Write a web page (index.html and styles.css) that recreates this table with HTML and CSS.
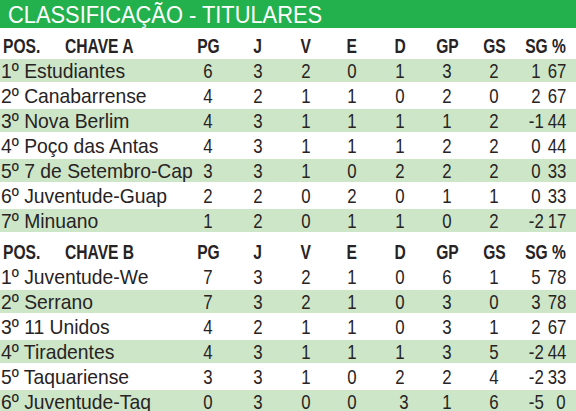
FILE: index.html
```html
<!DOCTYPE html>
<html lang="pt">
<head>
<meta charset="utf-8">
<title>Classificação - Titulares</title>
<link rel="stylesheet" href="styles.css">
</head>
<body>
<div class="board">
  <div class="title"><span>CLASSIFICAÇÃO - TITULARES</span></div>

  <div class="group group-a">
    <div class="row head">
      <div class="name"><span class="pos">POS.</span><span class="key">CHAVE A</span></div>
      <div class="n"><span>PG</span></div><div class="n"><span>J</span></div><div class="n"><span>V</span></div><div class="n"><span>E</span></div><div class="n"><span>D</span></div><div class="n"><span>GP</span></div><div class="n gs"><span>GS</span></div><div class="n"><span>SG</span></div><div class="p"><span>%</span></div>
    </div>
    <div class="row alt"><div class="name"><span>1º Estudiantes</span></div><div class="n"><span>6</span></div><div class="n"><span>3</span></div><div class="n"><span>2</span></div><div class="n"><span>0</span></div><div class="n"><span>1</span></div><div class="n"><span>3</span></div><div class="n gs"><span>2</span></div><div class="n"><span>1</span></div><div class="p"><span>67</span></div></div>
    <div class="row"><div class="name"><span>2º Canabarrense</span></div><div class="n"><span>4</span></div><div class="n"><span>2</span></div><div class="n"><span>1</span></div><div class="n"><span>1</span></div><div class="n"><span>0</span></div><div class="n"><span>2</span></div><div class="n gs"><span>0</span></div><div class="n"><span>2</span></div><div class="p"><span>67</span></div></div>
    <div class="row alt"><div class="name"><span>3º Nova Berlim</span></div><div class="n"><span>4</span></div><div class="n"><span>3</span></div><div class="n"><span>1</span></div><div class="n"><span>1</span></div><div class="n"><span>1</span></div><div class="n"><span>1</span></div><div class="n gs"><span>2</span></div><div class="n"><span>-1</span></div><div class="p"><span>44</span></div></div>
    <div class="row"><div class="name"><span>4º Poço das Antas</span></div><div class="n"><span>4</span></div><div class="n"><span>3</span></div><div class="n"><span>1</span></div><div class="n"><span>1</span></div><div class="n"><span>1</span></div><div class="n"><span>2</span></div><div class="n gs"><span>2</span></div><div class="n"><span>0</span></div><div class="p"><span>44</span></div></div>
    <div class="row alt"><div class="name"><span>5º 7 de Setembro-Cap</span></div><div class="n"><span>3</span></div><div class="n"><span>3</span></div><div class="n"><span>1</span></div><div class="n"><span>0</span></div><div class="n"><span>2</span></div><div class="n"><span>2</span></div><div class="n gs"><span>2</span></div><div class="n"><span>0</span></div><div class="p"><span>33</span></div></div>
    <div class="row"><div class="name"><span>6º Juventude-Guap</span></div><div class="n"><span>2</span></div><div class="n"><span>2</span></div><div class="n"><span>0</span></div><div class="n"><span>2</span></div><div class="n"><span>0</span></div><div class="n"><span>1</span></div><div class="n gs"><span>1</span></div><div class="n"><span>0</span></div><div class="p"><span>33</span></div></div>
    <div class="row alt"><div class="name"><span>7º Minuano</span></div><div class="n"><span>1</span></div><div class="n"><span>2</span></div><div class="n"><span>0</span></div><div class="n"><span>1</span></div><div class="n"><span>1</span></div><div class="n"><span>0</span></div><div class="n gs"><span>2</span></div><div class="n"><span>-2</span></div><div class="p"><span>17</span></div></div>
  </div>

  <div class="group group-b">
    <div class="row head">
      <div class="name"><span class="pos">POS.</span><span class="key">CHAVE B</span></div>
      <div class="n"><span>PG</span></div><div class="n"><span>J</span></div><div class="n"><span>V</span></div><div class="n"><span>E</span></div><div class="n"><span>D</span></div><div class="n"><span>GP</span></div><div class="n gs"><span>GS</span></div><div class="n"><span>SG</span></div><div class="p"><span>%</span></div>
    </div>
    <div class="row"><div class="name"><span>1º Juventude-We</span></div><div class="n"><span>7</span></div><div class="n"><span>3</span></div><div class="n"><span>2</span></div><div class="n"><span>1</span></div><div class="n"><span>0</span></div><div class="n"><span>6</span></div><div class="n gs"><span>1</span></div><div class="n"><span>5</span></div><div class="p"><span>78</span></div></div>
    <div class="row alt"><div class="name"><span>2º Serrano</span></div><div class="n"><span>7</span></div><div class="n"><span>3</span></div><div class="n"><span>2</span></div><div class="n"><span>1</span></div><div class="n"><span>0</span></div><div class="n"><span>3</span></div><div class="n gs"><span>0</span></div><div class="n"><span>3</span></div><div class="p"><span>78</span></div></div>
    <div class="row"><div class="name"><span>3º 11 Unidos</span></div><div class="n"><span>4</span></div><div class="n"><span>2</span></div><div class="n"><span>1</span></div><div class="n"><span>1</span></div><div class="n"><span>0</span></div><div class="n"><span>3</span></div><div class="n gs"><span>1</span></div><div class="n"><span>2</span></div><div class="p"><span>67</span></div></div>
    <div class="row alt"><div class="name"><span>4º Tiradentes</span></div><div class="n"><span>4</span></div><div class="n"><span>3</span></div><div class="n"><span>1</span></div><div class="n"><span>1</span></div><div class="n"><span>1</span></div><div class="n"><span>3</span></div><div class="n gs"><span>5</span></div><div class="n"><span>-2</span></div><div class="p"><span>44</span></div></div>
    <div class="row"><div class="name"><span>5º Taquariense</span></div><div class="n"><span>3</span></div><div class="n"><span>3</span></div><div class="n"><span>1</span></div><div class="n"><span>0</span></div><div class="n"><span>2</span></div><div class="n"><span>2</span></div><div class="n gs"><span>4</span></div><div class="n"><span>-2</span></div><div class="p"><span>33</span></div></div>
    <div class="row alt"><div class="name"><span>6º Juventude-Taq</span></div><div class="n"><span>0</span></div><div class="n"><span>3</span></div><div class="n"><span>0</span></div><div class="n"><span>0</span></div><div class="n shift"><span>3</span></div><div class="n"><span>1</span></div><div class="n gs"><span>6</span></div><div class="n"><span>-5</span></div><div class="p"><span>0</span></div></div>
  </div>
</div>
</body>
</html>
```

FILE: styles.css
```css
html, body {
  margin: 0;
  padding: 0;
  background: #ffffff;
}

body {
  width: 576px;
  height: 411px;
  overflow: hidden;
  font-family: "Liberation Sans", Arial, sans-serif;
  color: #272324;
}

.board {
  display: flex;
  flex-direction: column;
}

.title {
  height: 28px;
  background: #22b14c;
  color: #ffffff;
  display: flex;
  align-items: center;
  padding-left: 8px;
}

.title span {
  display: inline-block;
  font-size: 23.5px;
  line-height: 28px;
  transform: scaleX(0.93);
  transform-origin: left center;
  white-space: nowrap;
  padding-top: 1px;
}

.group-a {
  margin-top: 5px;
}

.group-b {
  margin-top: 5px;
}

.row {
  display: grid;
  grid-template-columns: 184px 48px 52px 44px 48px 48px 46px 51px 30px 25px;
  align-items: center;
  height: 23px;
  margin-bottom: 2px;
}

.row > div {
  min-width: 0;
}

.row.alt {
  background: #cde6c8;
}

.row.head {
  height: 26px;
  margin-bottom: 0;
  font-weight: bold;
}

.row span {
  display: inline-block;
  white-space: nowrap;
  font-size: 21px;
  line-height: 23px;
  transform: scaleX(0.92);
}

.row .n span,
.row .p span {
  transform: scaleX(0.8);
}

.row.head span,
.row.head .n span,
.row.head .p span {
  font-size: 20px;
  line-height: 26px;
  transform: scaleX(0.78);
}

.name {
  display: flex;
  padding-left: 1px;
}

.name span {
  transform-origin: left center;
}

.row.head .name {
  padding-left: 3px;
}

.row.head .key {
  margin-left: 14px;
}

.n {
  display: flex;
  justify-content: center;
}

.n span {
  transform-origin: center center;
}

.n.gs {
  padding-right: 3px;
}

.n.shift {
  padding-left: 8px;
}

.p {
  display: flex;
  justify-content: flex-end;
  padding-right: 10px;
}

.p span {
  transform-origin: right center;
}
```
